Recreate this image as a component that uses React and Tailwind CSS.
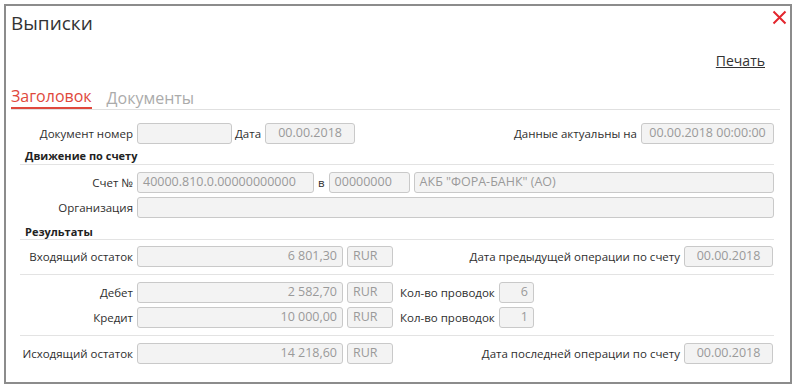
import React from "react";

const FONT = { fontFamily: '"Open Sans", "Noto Sans", sans-serif' };

function Field({ value = "", className = "", align = "left" }) {
  const alignClass = align === "right" ? "justify-end" : align === "center" ? "justify-center" : "justify-start";
  return (
    <div
      className={`flex h-[21px] shrink-0 items-center rounded-[3px] border border-[#c9c9c9] bg-[#f3f3f3] px-[5px] text-[12.5px] text-[#9a9a9a] ${alignClass} ${className}`}
    >
      <span className="whitespace-nowrap">{value}</span>
    </div>
  );
}

function Label({ children, className = "" }) {
  return <span className={`whitespace-nowrap text-[11.5px] text-[#2e2e2e] ${className}`}>{children}</span>;
}

function Section({ children, className = "" }) {
  return (
    <div
      className={`ml-[9px] border-b border-[#e3e3e3] pl-[5px] text-[11px] font-bold leading-[13px] text-[#222] ${className}`}
    >
      {children}
    </div>
  );
}

export default function App() {
  return (
    <div className="h-[388px] w-[800px] bg-white pl-[4px] pt-[4px]" style={FONT}>
      <div className="relative h-[380px] w-[788px] border-2 border-[#8c8c8c] pl-[5px] pr-[16px]">
        <div className="pt-[4px] text-[19px] leading-[26px] text-[#333]">Выписки</div>

        <button type="button" className="absolute right-[2px] top-[3px] p-[1px]" aria-label="Закрыть">
          <svg width="15" height="15" viewBox="0 0 15 15">
            <path d="M1.5 1.5 L13.5 13.5 M13.5 1.5 L1.5 13.5" stroke="#e3262e" strokeWidth="2" />
          </svg>
        </button>

        <div className="mt-[16px] flex justify-end pr-[9px]">
          <a className="text-[14px] leading-[18px] text-[#333] underline">Печать</a>
        </div>

        <div className="mr-[-6px] mt-[16px] flex items-end gap-[15px] border-b border-[#e0e0e0]">
          <span className="border-b-2 border-[#e0483c] pb-[1px] text-[16px] leading-[20px] text-[#e0483c]">
            Заголовок
          </span>
          <span className="pb-[1px] text-[16px] leading-[20px] text-[#ababab]">Документы</span>
        </div>

        <div className="mt-[13px] flex items-center">
          <Label className="w-[122px] text-right">Документ номер</Label>
          <Field className="ml-[4px] w-[95px]" />
          <Label className="ml-[3px]">Дата</Label>
          <Field className="ml-[4px] w-[90px]" value="00.00.2018" align="center" />
          <Label className="ml-auto">Данные актуальны на</Label>
          <Field className="ml-[4px] w-[133px]" value="00.00.2018 00:00:00" align="center" />
        </div>

        <Section className="mt-[5px] pb-[2px]">Движение по счету</Section>

        <div className="mt-[7px] flex items-center">
          <Label className="w-[122px] text-right">Счет №</Label>
          <Field className="ml-[4px] w-[177px]" value="40000.810.0.00000000000" />
          <Label className="ml-[4px]">в</Label>
          <Field className="ml-[4px] w-[81px]" value="00000000" />
          <Field className="ml-[4px] flex-1" value={'АКБ "ФОРА-БАНК" (АО)'} />
        </div>

        <div className="mt-[4px] flex items-center">
          <Label className="w-[122px] text-right">Организация</Label>
          <Field className="ml-[4px] flex-1" />
        </div>

        <Section className="mt-[7px] pb-[1px]">Результаты</Section>

        <div className="mt-[6px] flex items-center">
          <Label className="w-[122px] text-right">Входящий остаток</Label>
          <Field className="ml-[4px] w-[206px]" value="6 801,30" align="right" />
          <Field className="ml-[4px] w-[46px]" value="RUR" />
          <Label className="ml-auto">Дата предыдущей операции по счету</Label>
          <Field className="ml-[4px] mr-[1px] w-[89px]" value="00.00.2018" align="center" />
        </div>

        <div className="ml-[9px] mt-[7px] border-b border-[#e3e3e3]" />

        <div className="mt-[7px] flex items-center">
          <Label className="w-[122px] text-right">Дебет</Label>
          <Field className="ml-[4px] w-[206px]" value="2 582,70" align="right" />
          <Field className="ml-[4px] w-[46px]" value="RUR" />
          <Label className="ml-[7px]">Кол-во проводок</Label>
          <Field className="ml-[4px] w-[35px]" value="6" align="right" />
        </div>

        <div className="mt-[4px] flex items-center">
          <Label className="w-[122px] text-right">Кредит</Label>
          <Field className="ml-[4px] w-[206px]" value="10 000,00" align="right" />
          <Field className="ml-[4px] w-[46px]" value="RUR" />
          <Label className="ml-[7px]">Кол-во проводок</Label>
          <Field className="ml-[4px] w-[35px]" value="1" align="right" />
        </div>

        <div className="ml-[9px] mt-[7px] border-b border-[#e3e3e3]" />

        <div className="mt-[7px] flex items-center">
          <Label className="w-[122px] text-right">Исходящий остаток</Label>
          <Field className="ml-[4px] w-[206px]" value="14 218,60" align="right" />
          <Field className="ml-[4px] w-[46px]" value="RUR" />
          <Label className="ml-auto">Дата последней операции по счету</Label>
          <Field className="ml-[4px] mr-[1px] w-[89px]" value="00.00.2018" align="center" />
        </div>
      </div>
    </div>
  );
}
